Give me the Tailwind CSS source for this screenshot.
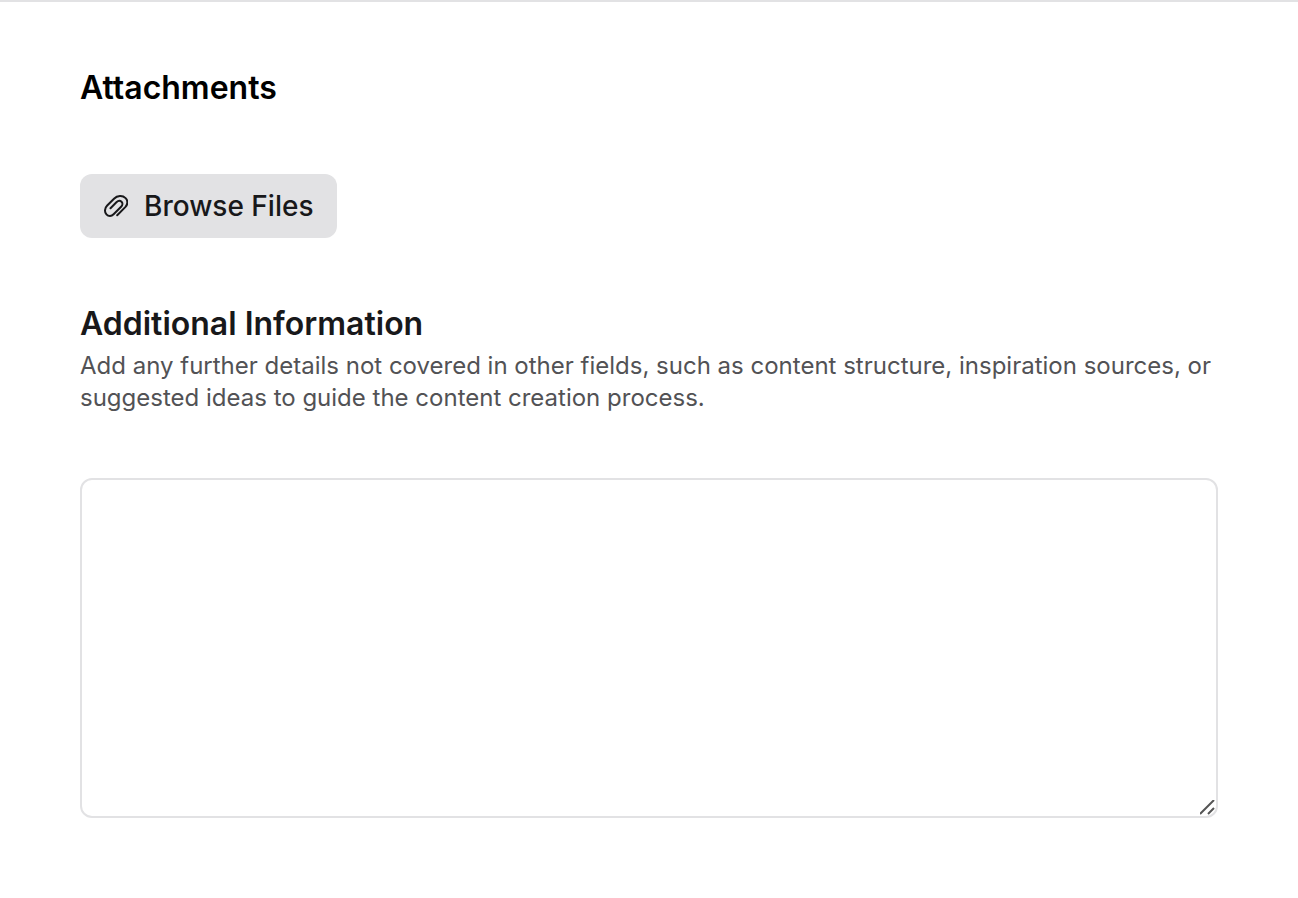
<!DOCTYPE html>
<html lang="en">
<head>
<meta charset="utf-8">
<meta name="viewport" content="width=device-width, initial-scale=1">
<title>Attachments</title>
<script src="https://cdn.jsdelivr.net/npm/@tailwindcss/browser@4"></script>
</head>
<body class="bg-white font-['Inter',sans-serif] text-[#18181a] antialiased [font-variant-ligatures:none]">
<form class="border-t-2 border-[#e2e2e4] px-20 pt-16 pb-20">
  <section>
    <h2 class="text-[32px] leading-[44px] font-semibold text-black">Attachments</h2>
    <button type="button" class="mt-16 flex h-16 items-center gap-4 rounded-xl bg-[#e2e2e4] px-6 text-[28px] font-medium">
      <svg class="size-6" viewBox="0 0 24 24" fill="none" stroke="currentColor" stroke-width="2" stroke-linecap="round" stroke-linejoin="round" aria-hidden="true"><path d="M13.2 21.2 21.5 12.9C24 10.2 23.9 6.4 21.6 4.1 18.5 1 13.4 1.3 10 4.7L3.2 11.5C.6 14.1.3 18.2 2.4 20.3 4.5 22.6 7.5 22.4 9.6 20.3L17.1 12.8C18.7 11.2 18.8 9 17.5 7.7 16.1 6.4 14 6.7 12.4 8.3L6.5 14.2"/></svg>
      Browse Files
    </button>
  </section>
  <section class="mt-16">
    <label for="info" class="block text-[32px] leading-[44px] font-semibold">Additional Information</label>
    <p id="hint" class="mt-1 text-[24px] leading-8 text-[#525255]">Add any further details not covered in other fields, such as content structure, inspiration sources, or suggested ideas to guide the content creation process.</p>
    <div class="relative mt-16">
      <textarea id="info" aria-describedby="hint" class="block h-[340px] w-full resize-y rounded-xl border-2 border-[#e2e2e4] px-6 py-4 text-[28px] outline-none [&::-webkit-resizer]:bg-transparent"></textarea>
      <svg class="pointer-events-none absolute right-0.5 bottom-0.5 size-4" viewBox="0 0 16 16" fill="none" stroke="#555" stroke-width="2" aria-hidden="true"><path d="M0 14 14 0M8 14l6-6"/></svg>
    </div>
  </section>
</form>
</body>
</html>
